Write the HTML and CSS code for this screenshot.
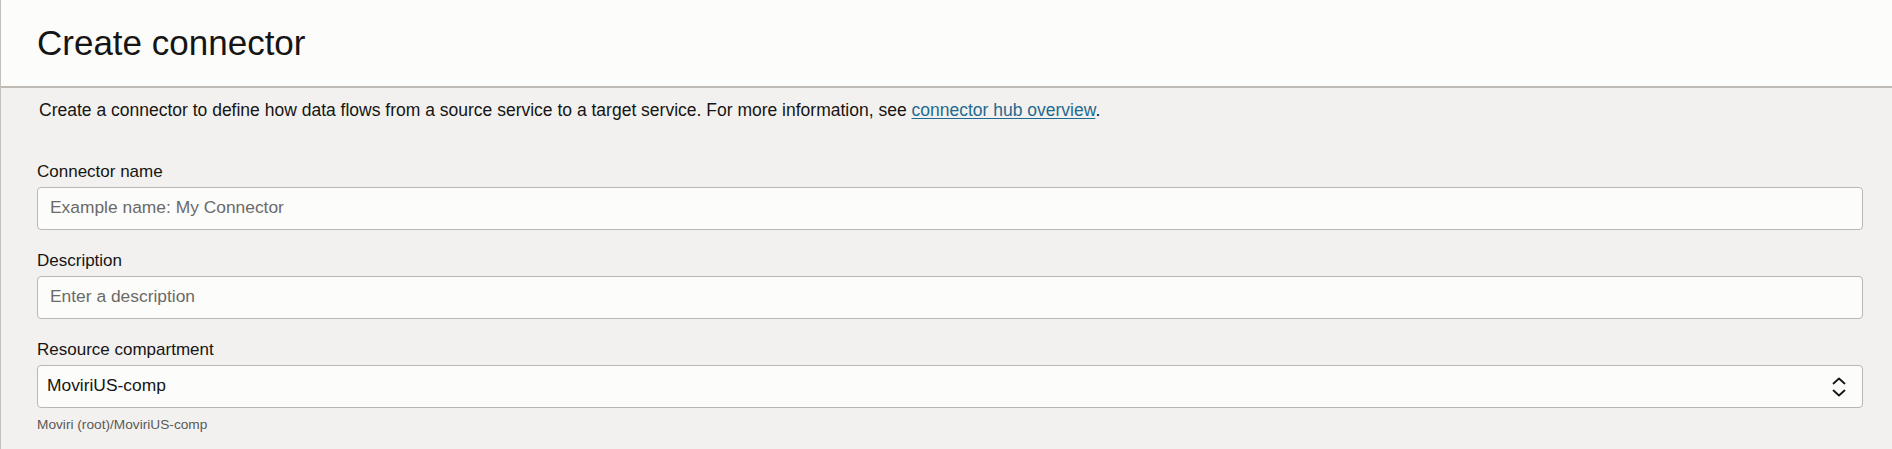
FILE: index.html
```html
<!DOCTYPE html>
<html lang="en">
<head>
<meta charset="utf-8">
<title>Create connector</title>
<link rel="stylesheet" href="styles.css">
</head>
<body>
<div class="page">
  <header class="header">
    <h1 class="title">Create connector</h1>
  </header>
  <main class="content">
    <p class="intro">Create a connector to define how data flows from a source service to a target service. For more information, see <a class="link" href="#">connector hub overview</a>.</p>
    <div class="form">
      <div class="field">
        <label class="label">Connector name</label>
        <div class="input"><span class="placeholder">Example name: My Connector</span></div>
      </div>
      <div class="field">
        <label class="label">Description</label>
        <div class="input"><span class="placeholder">Enter a description</span></div>
      </div>
      <div class="field">
        <label class="label">Resource compartment</label>
        <div class="input select">
          <span class="value">MoviriUS-comp</span>
          <svg class="chevrons" width="14" height="20" viewBox="0 0 14 20" aria-hidden="true">
            <path d="M1.5 6.5 L7 1.5 L12.5 6.5" fill="none" stroke="#161513" stroke-width="1.8" stroke-linecap="round" stroke-linejoin="round"/>
            <path d="M1.5 13.5 L7 18.5 L12.5 13.5" fill="none" stroke="#161513" stroke-width="1.8" stroke-linecap="round" stroke-linejoin="round"/>
          </svg>
        </div>
        <div class="helper">Moviri (root)/MoviriUS-comp</div>
      </div>
    </div>
  </main>
</div>
</body>
</html>
```

FILE: styles.css
```css
html, body {
  margin: 0;
  padding: 0;
}

body {
  background: #f2f1ef;
  font-family: "Liberation Sans", Arial, sans-serif;
  color: #161513;
}

.page {
  border-left: 1px solid #c3c0bc;
  min-height: 449px;
  box-sizing: border-box;
}

.header {
  background: #fcfcfb;
  height: 88px;
  box-sizing: border-box;
  padding: 23px 0 0 36px;
  border-bottom: 2px solid #bebbb7;
}

.title {
  margin: 0;
  font-size: 35px;
  line-height: 40px;
  font-weight: normal;
  color: #161513;
}

.content {
  padding: 10px 29px 0 36px;
}

.intro {
  margin: 0 0 0 2px;
  font-size: 17.5px;
  line-height: 24px;
}

.link {
  color: #1f6a90;
  text-decoration: underline;
  text-underline-offset: 2px;
}

.form {
  display: flex;
  flex-direction: column;
  gap: 21px;
  margin-top: 40px;
}

.field {
  display: flex;
  flex-direction: column;
}

.label {
  font-size: 17px;
  line-height: 20px;
  margin-bottom: 5px;
}

.input {
  height: 43px;
  box-sizing: border-box;
  background: #fcfcfb;
  border: 1px solid #bab7b3;
  border-radius: 4px;
  display: flex;
  align-items: center;
  padding: 0 13px 2px 12px;
  font-size: 17.4px;
}

.placeholder {
  color: #6b6a68;
}

.select {
  padding-left: 9px;
  padding-right: 16px;
  justify-content: space-between;
}

.value {
  color: #161513;
}

.chevrons {
  display: block;
  margin-top: 2px;
}

.helper {
  margin-top: 9px;
  font-size: 13.7px;
  line-height: 16px;
  color: #5a5957;
}
```
